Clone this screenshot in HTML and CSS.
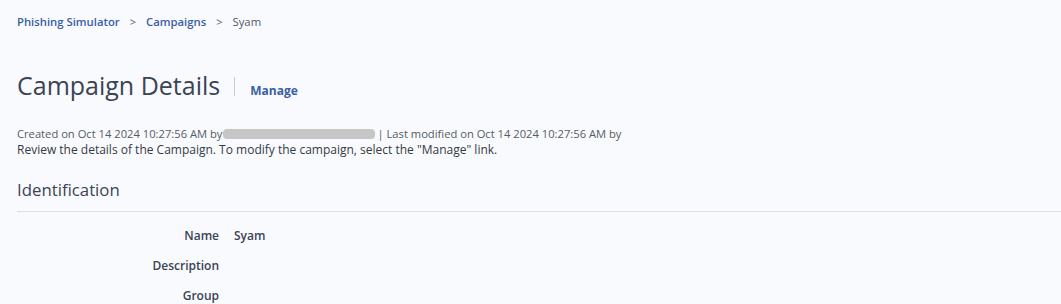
FILE: index.html
```html
<!DOCTYPE html>
<html>
<head>
<meta charset="utf-8">
<link rel="stylesheet" href="styles.css">
</head>
<body>
<div class="page">
  <nav class="crumbs">
    <a class="crumb-link">Phishing Simulator</a>
    <span class="sep">&gt;</span>
    <a class="crumb-link">Campaigns</a>
    <span class="sep">&gt;</span>
    <span class="crumb-current">Syam</span>
  </nav>
  <div class="title-row">
    <h1 class="title">Campaign Details</h1>
    <span class="divider"></span>
    <a class="manage">Manage</a>
  </div>
  <div class="meta">Created on Oct 14 2024 10:27:56 AM by<span class="redact"></span>| Last modified on Oct 14 2024 10:27:56 AM by</div>
  <div class="intro">Review the details of the Campaign. To modify the campaign, select the "Manage" link.</div>
  <h2 class="section">Identification</h2>
  <div class="fields">
    <div class="label">Name</div><div class="value">Syam</div>
    <div class="label">Description</div><div class="value"></div>
    <div class="label">Group</div><div class="value"></div>
  </div>
</div>
</body>
</html>
```

FILE: styles.css
```css
html, body {
  margin: 0;
  padding: 0;
  background: #f9fafd;
}
body {
  font-family: "Open Sans", "Noto Sans", sans-serif;
  color: #3c4656;
}
.page {
  padding: 12px 0 0 17px;
}
.crumbs {
  display: flex;
  align-items: center;
  font-size: 11.3px;
  height: 18px;
}
.crumb-link {
  color: #3a5ea6;
  font-weight: 600;
}
.sep {
  color: #555d6a;
  margin: 0 10px;
  font-size: 11px;
}
.crumb-current {
  color: #4e5766;
}
.title-row {
  display: flex;
  align-items: center;
  margin-top: 38px;
  height: 34px;
}
.title {
  margin: 0;
  font-size: 25px;
  font-weight: 400;
  color: #3a4455;
  line-height: 34px;
}
.divider {
  width: 1px;
  height: 19px;
  background: #c9ccd2;
  margin: 3px 15px 0 14px;
}
.manage {
  color: #3a5ea6;
  font-weight: 700;
  font-size: 12px;
  margin-top: 10px;
}
.meta {
  margin-top: 24px;
  font-size: 11.2px;
  color: #555c66;
  line-height: 16px;
  display: flex;
  align-items: center;
  white-space: nowrap;
}
.redact {
  display: inline-block;
  width: 152px;
  height: 10px;
  background: #c6c6c6;
  border-radius: 4px;
  margin: 0 2px 0 1px;
}
.intro {
  font-size: 12px;
  color: #333a44;
  line-height: 16px;
}
.section {
  margin: 20px 0 0 0;
  font-size: 16.8px;
  font-weight: 400;
  color: #3a4455;
  line-height: 24px;
  padding-bottom: 9px;
  border-bottom: 1px solid #dcdee4;
}
.fields {
  display: grid;
  grid-template-columns: 202px 1fr;
  column-gap: 15px;
  margin-top: 15px;
  font-size: 12px;
}
.label {
  text-align: right;
  font-weight: 600;
  color: #3a4455;
  height: 30px;
  line-height: 18px;
}
.value {
  font-weight: 600;
  color: #3a4455;
  height: 30px;
  line-height: 18px;
}
```
